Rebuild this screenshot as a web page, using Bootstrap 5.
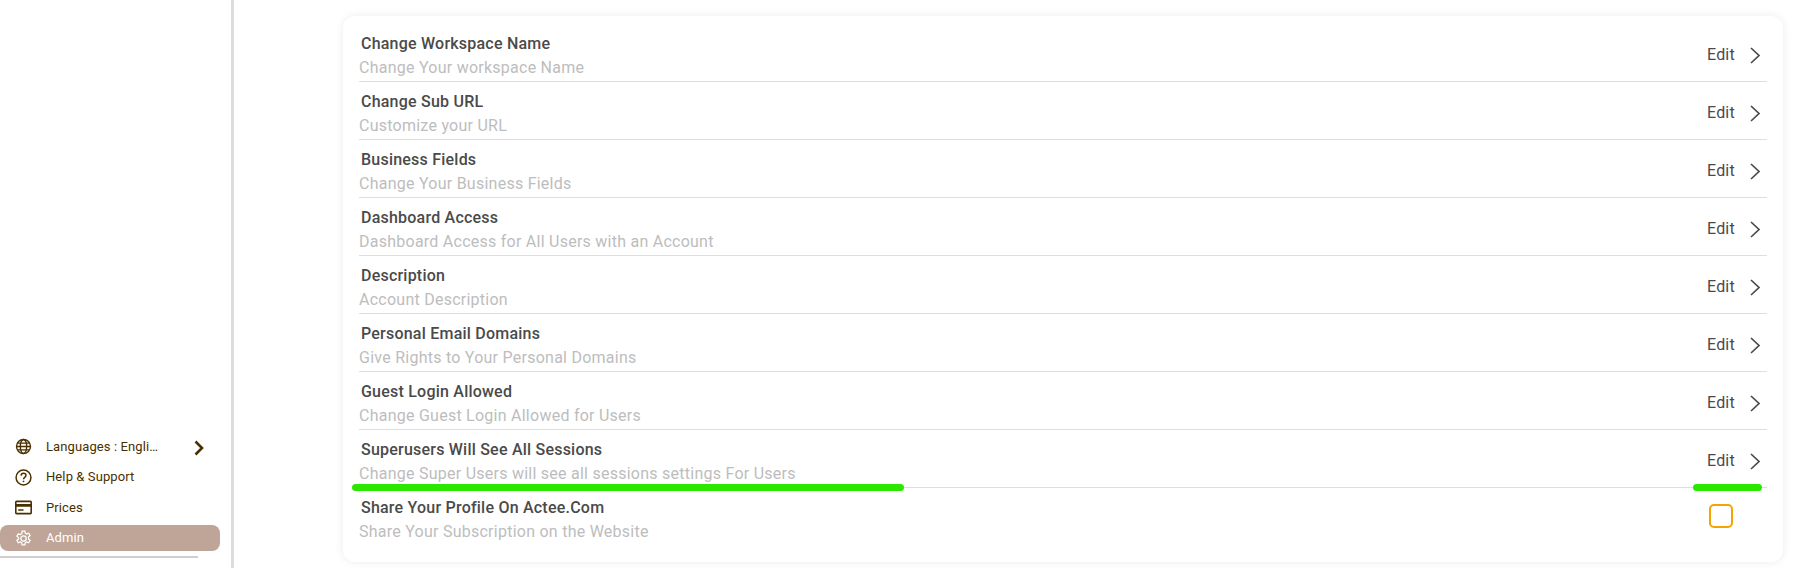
<!DOCTYPE html>
<html lang="en">
<head>
<meta charset="utf-8">
<title>Workspace settings</title>
<link rel="stylesheet" href="https://cdn.jsdelivr.net/npm/bootstrap@5.3.0/dist/css/bootstrap.min.css">
<style>
html,body{height:568px;overflow:hidden;background:#fff;font-family:Roboto,sans-serif}
.shell{height:568px}
.side{width:234px;flex:none;border-right:3px solid #dcdcdc;padding-bottom:10px}
.side-item{height:30.5px;padding-left:15px;font-size:13px;color:#4a3000;gap:14px;letter-spacing:.1px}
.side-item svg{width:17px;height:17px;flex:none}
.side-label{width:116px;white-space:nowrap;overflow:hidden;text-overflow:ellipsis;line-height:1.2}
.side-active{width:220px;height:26px;margin-top:2px;background:#bfa598;border-radius:8px;color:#fff}
.side-rule{width:198px;height:2px;background:#cfcfcf;margin-top:5px}
.lang-arrow{width:12px!important;height:18px!important;margin-left:17px;margin-top:3px}
.main-area{padding:16px 14px 6px 109px}
.panel{height:546px;border-radius:12px;box-shadow:0 0 10px rgba(0,0,0,.08);padding:8px 16px 0}
.set-row{height:58px;border-bottom:1px solid #dedede;position:relative}
.set-row:last-child{border-bottom:0}
.set-title{font-size:16px;font-weight:500;color:#4a4a4a;line-height:20px;padding-left:2px;padding-top:10px;letter-spacing:.22px}
.set-sub{font-size:16px;color:#bdbdbd;line-height:20px;margin-top:4px;letter-spacing:.25px}
.set-edit{font-size:16px;color:#4a4a4a;width:60px;gap:15px;margin-top:5px;letter-spacing:.2px}
.set-edit svg{width:11px;height:17px;flex:none;margin-top:1px}
.tick{width:24px;height:24px;border:2px solid #f5a300;border-radius:5px;margin-right:34px;margin-top:-2px}
.mark-green{position:absolute;height:7px;background:#2ce800;border-radius:4px;bottom:-4px}
.mark-a{left:-7px;width:552px}
.mark-b{right:5px;width:69px}
</style>
</head>
<body>
<div class="shell d-flex">
  <aside class="side d-flex flex-column justify-content-end">
    <div class="side-item d-flex align-items-center">
      <svg viewBox="0 0 16 16" fill="none" stroke="currentColor" stroke-width="1.3"><circle cx="8" cy="8" r="6.6"/><ellipse cx="8" cy="8" rx="3" ry="6.6"/><path d="M1.4 8h13.2M2.3 4.8h11.4M2.3 11.2h11.4"/></svg>
      <span class="side-label">Languages : English</span>
      <svg class="lang-arrow" viewBox="0 0 12 18" fill="none" stroke="currentColor" stroke-width="2.6"><path d="M2.5 2.5 9 9l-6.500 6.500"/></svg>
    </div>
    <div class="side-item d-flex align-items-center">
      <svg viewBox="0 0 16 16" fill="none" stroke="currentColor" stroke-width="1.400"><circle cx="8" cy="8" r="7"/><path d="M5.700 6.200C5.800 4.800 6.800 4.100 8 4.100c1.300 0 2.300.8 2.300 2 0 1.800-2.300 1.700-2.300 3.600"/><path d="M8 11v1.400"/></svg>
      <span class="side-label">Help &amp; Support</span>
    </div>
    <div class="side-item d-flex align-items-center">
      <svg viewBox="0 0 16 16" fill="currentColor"><path fill-rule="evenodd" d="M1.500 1.500h13A1.500 1.500 0 0 1 16 3v10a1.500 1.500 0 0 1-1.500 1.500h-13A1.500 1.500 0 0 1 0 13V3a1.500 1.500 0 0 1 1.500-1.500ZM1.500 3v1.700h13V3h-13Zm0 4.300V13h13V7.300h-13Zm1.500 2.300h5V11H3V9.600Z"/></svg>
      <span class="side-label">Prices</span>
    </div>
    <div class="side-item side-active d-flex align-items-center">
      <svg viewBox="0 0 16 16" fill="none" stroke="currentColor" stroke-width="1.200"><circle cx="8" cy="8" r="2.500"/><path d="M6.700 1h2.600l.4 2 1.300.7 1.900-.7 1.300 2.200-1.500 1.400v1.800l1.500 1.400-1.300 2.200-1.900-.7-1.300.7-.4 2H6.700l-.4-2-1.300-.7-1.900.7-1.300-2.200 1.500-1.400V7.200L1.800 5.800l1.300-2.200 1.900.7 1.300-.7.4-2Z"/></svg>
      <span class="side-label">Admin</span>
    </div>
    <div class="side-rule"></div>
  </aside>
  <main class="main-area flex-grow-1">
    <div class="panel bg-white">
      <div class="set-row d-flex justify-content-between align-items-center">
        <div class="align-self-start"><div class="set-title">Change Workspace Name</div><div class="set-sub">Change Your workspace Name</div></div>
        <div class="set-edit d-flex align-items-center"><span>Edit</span><svg viewBox="0 0 11 17" fill="none" stroke="#4a4a4a" stroke-width="1.700"><path d="M1 1l8 7.500L1 16"/></svg></div>
      </div>
      <div class="set-row d-flex justify-content-between align-items-center">
        <div class="align-self-start"><div class="set-title">Change Sub URL</div><div class="set-sub">Customize your URL</div></div>
        <div class="set-edit d-flex align-items-center"><span>Edit</span><svg viewBox="0 0 11 17" fill="none" stroke="#4a4a4a" stroke-width="1.700"><path d="M1 1l8 7.500L1 16"/></svg></div>
      </div>
      <div class="set-row d-flex justify-content-between align-items-center">
        <div class="align-self-start"><div class="set-title">Business Fields</div><div class="set-sub">Change Your Business Fields</div></div>
        <div class="set-edit d-flex align-items-center"><span>Edit</span><svg viewBox="0 0 11 17" fill="none" stroke="#4a4a4a" stroke-width="1.700"><path d="M1 1l8 7.500L1 16"/></svg></div>
      </div>
      <div class="set-row d-flex justify-content-between align-items-center">
        <div class="align-self-start"><div class="set-title">Dashboard Access</div><div class="set-sub">Dashboard Access for All Users with an Account</div></div>
        <div class="set-edit d-flex align-items-center"><span>Edit</span><svg viewBox="0 0 11 17" fill="none" stroke="#4a4a4a" stroke-width="1.700"><path d="M1 1l8 7.500L1 16"/></svg></div>
      </div>
      <div class="set-row d-flex justify-content-between align-items-center">
        <div class="align-self-start"><div class="set-title">Description</div><div class="set-sub">Account Description</div></div>
        <div class="set-edit d-flex align-items-center"><span>Edit</span><svg viewBox="0 0 11 17" fill="none" stroke="#4a4a4a" stroke-width="1.700"><path d="M1 1l8 7.500L1 16"/></svg></div>
      </div>
      <div class="set-row d-flex justify-content-between align-items-center">
        <div class="align-self-start"><div class="set-title">Personal Email Domains</div><div class="set-sub">Give Rights to Your Personal Domains</div></div>
        <div class="set-edit d-flex align-items-center"><span>Edit</span><svg viewBox="0 0 11 17" fill="none" stroke="#4a4a4a" stroke-width="1.700"><path d="M1 1l8 7.500L1 16"/></svg></div>
      </div>
      <div class="set-row d-flex justify-content-between align-items-center">
        <div class="align-self-start"><div class="set-title">Guest Login Allowed</div><div class="set-sub">Change Guest Login Allowed for Users</div></div>
        <div class="set-edit d-flex align-items-center"><span>Edit</span><svg viewBox="0 0 11 17" fill="none" stroke="#4a4a4a" stroke-width="1.700"><path d="M1 1l8 7.500L1 16"/></svg></div>
      </div>
      <div class="set-row d-flex justify-content-between align-items-center">
        <div class="align-self-start"><div class="set-title">Superusers Will See All Sessions</div><div class="set-sub">Change Super Users will see all sessions settings For Users</div></div>
        <div class="set-edit d-flex align-items-center"><span>Edit</span><svg viewBox="0 0 11 17" fill="none" stroke="#4a4a4a" stroke-width="1.700"><path d="M1 1l8 7.500L1 16"/></svg></div>
        <span class="mark-green mark-a"></span><span class="mark-green mark-b"></span>
      </div>
      <div class="set-row d-flex justify-content-between align-items-center">
        <div class="align-self-start"><div class="set-title">Share Your Profile On Actee.Com</div><div class="set-sub">Share Your Subscription on the Website</div></div>
        <div class="tick"></div>
      </div>
    </div>
  </main>
</div>
</body>
</html>
